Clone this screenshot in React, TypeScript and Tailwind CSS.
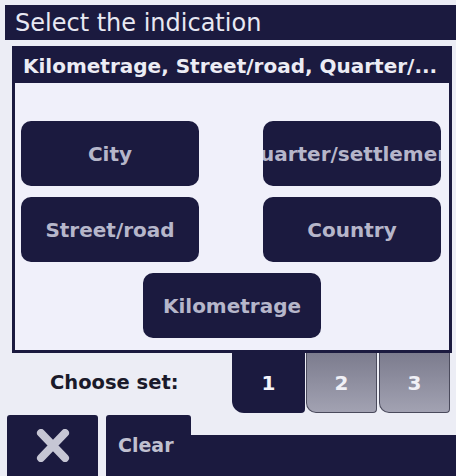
import React from 'react';

const NAVY = 'bg-[#1b1a3f]';

function OptionButton({ label }: { label: string }) {
  return (
    <div className="w-[178px] h-[65px] rounded-[10px] bg-[#1b1a3f] flex items-center justify-center overflow-hidden">
      <span className="whitespace-nowrap text-[20px] font-bold text-[#b6b6ca]">{label}</span>
    </div>
  );
}

export default function App() {
  return (
    <div
      className="w-[456px] h-[476px] bg-[#ecedf5] overflow-hidden"
      style={{ fontFamily: '"DejaVu Sans", "Liberation Sans", sans-serif' }}
    >
      {/* Title bar */}
      <div className="pt-[5px] pl-[5px]">
        <div className={`${NAVY} h-[35px] flex items-center pl-[10px] text-[24px] text-[#e8e8f2]`}>
          Select the indication
        </div>
      </div>

      {/* Selection box */}
      <div className="ml-[12px] mt-[6px] w-[440px] h-[307px] border-[3px] border-[#1b1a3f] flex flex-col">
        <div className={`${NAVY} h-[34px] flex items-center pl-[8px] text-[20px] font-bold text-[#ececf4] whitespace-nowrap`}>
          Kilometrage, Street/road, Quarter/...
        </div>
        <div className="flex-1 bg-[#f0f0fa] pt-[38px] pl-[6px] pr-[8px]">
          <div className="grid grid-cols-[178px_178px] justify-between gap-y-[11px]">
            <OptionButton label="City" />
            <OptionButton label="Quarter/settlement" />
            <OptionButton label="Street/road" />
            <OptionButton label="Country" />
          </div>
          <div className="flex justify-center mt-[11px] pl-[2px]">
            <OptionButton label="Kilometrage" />
          </div>
        </div>
      </div>

      {/* Set chooser */}
      <div className="flex h-[60px]">
        <div className="w-[232px] flex items-center pl-[50px] text-[19.5px] font-bold text-[#1a1a2a]">Choose set:</div>
        <div className="w-[73px] h-[60px] bg-[#1b1a3f] rounded-bl-[12px] rounded-br-[4px] flex items-center justify-center text-[20px] font-bold text-[#f4f4fa]">
          1
        </div>
        <div className="ml-[1px] w-[71px] h-[60px] border border-t-0 border-[#4a4a5c] bg-gradient-to-b from-[#7c7c8e] to-[#a2a2b2] rounded-bl-[10px] rounded-br-[4px] flex items-center justify-center text-[20px] font-bold text-[#f0f0f6]">
          2
        </div>
        <div className="ml-[2px] w-[71px] h-[60px] border border-t-0 border-[#4a4a5c] bg-gradient-to-b from-[#7c7c8e] to-[#a2a2b2] rounded-bl-[10px] rounded-br-[4px] flex items-center justify-center text-[20px] font-bold text-[#f0f0f6]">
          3
        </div>
      </div>

      {/* Bottom bar */}
      <div className="mt-[2px] flex items-end h-[61px]">
        <div className="ml-[7px] w-[91px] h-[61px] bg-[#1b1a3f] rounded-t-[3px] flex items-center justify-center">
          <svg width="34" height="33" viewBox="0 0 34 33">
            <path d="M5 4 L29 29 M29 4 L5 29" stroke="#c6c6d4" strokeWidth="8" strokeLinecap="round" />
          </svg>
        </div>
        <div className="ml-[8px] w-[85px] h-[61px] bg-[#1b1a3f] rounded-t-[3px] flex items-center pl-[12px] text-[19px] font-bold text-[#c0c0d0]">
          Clear
        </div>
        <div className="flex-1 h-[41px] bg-[#1b1a3f]" />
      </div>
    </div>
  );
}
